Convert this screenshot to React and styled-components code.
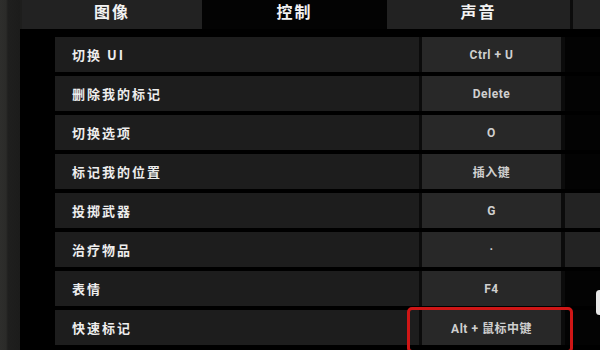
import React from "react";
import styled, { createGlobalStyle } from "styled-components";

const Global = createGlobalStyle`
  html, body { margin: 0; padding: 0; background: #000; }
  body { width: 600px; height: 350px; overflow: hidden; }
  * { box-sizing: border-box; }
`;

const Page = styled.div`
  position: relative;
  width: 600px;
  height: 350px;
  display: flex;
  background: #000;
  font-family: "Noto Sans CJK SC", "Noto Sans", sans-serif;
  overflow: hidden;
`;

const SideStrip = styled.div`
  width: 20px;
  flex-shrink: 0;
  background: linear-gradient(90deg, #2e2e2c 0px, #2b2b29 6px, #1f1f1e 8px, #1c1c1b 20px);
`;

const Main = styled.div`
  flex: 1;
  display: flex;
  flex-direction: column;
  min-width: 0;
`;

const TabBar = styled.div`
  height: 29px;
  display: flex;
  padding-left: 2px;
  background: #1e1e1d;
  flex-shrink: 0;
`;

const Tab = styled.div`
  width: ${(p) => p.$w}px;
  flex-shrink: 0;
  background: ${(p) => (p.$active ? "#030303" : "#222222")};
  color: #f2f2f2;
  font-size: 16px;
  font-weight: 700;
  letter-spacing: 2px;
  line-height: 22px;
  text-align: center;
`;

const TabGap = styled.div`
  width: 3px;
  flex-shrink: 0;
  background: #0c0c0c;
`;

const TabFill = styled.div`
  flex: 1;
  background: #242424;
`;

const Body = styled.div`
  flex: 1;
  padding: 8px 0 0 35px;
  display: flex;
  flex-direction: column;
  gap: 4px;
  background: #000;
`;

const Row = styled.div`
  height: 35px;
  flex-shrink: 0;
  display: grid;
  grid-template-columns: 364px 139px 1fr;
  column-gap: 3px;
  background: #0b0b0b;
`;

const LabelCell = styled.div`
  background: #1d1d1d;
  display: flex;
  align-items: center;
  padding-left: 17px;
  color: #ededed;
  font-size: 13px;
  font-weight: 700;
  letter-spacing: 2px;
`;

const KeyCell = styled.div`
  position: relative;
  background: #282828;
  display: flex;
  align-items: center;
  justify-content: center;
  color: #cfcfcf;
  font-family: "Roboto", "Noto Sans CJK SC", sans-serif;
  font-size: 12px;
  font-weight: 700;
  letter-spacing: 0.5px;
`;

const AltCell = styled.div`
  margin-left: 1px;
  background: ${(p) => (p.$grey ? "#232323" : "#030303")};
`;

const Highlight = styled.div`
  position: absolute;
  left: -15px;
  right: -12px;
  top: -3px;
  bottom: -8px;
  border: 3px solid #cf1616;
  border-radius: 5px;
  pointer-events: none;
`;

const EdgeSliver = styled.div`
  position: absolute;
  right: -3px;
  top: 290px;
  width: 7px;
  height: 25px;
  border-radius: 4px;
  background: #e8e8e8;
`;

const rows = [
  { label: "切换 UI", key: "Ctrl + U" },
  { label: "删除我的标记", key: "Delete" },
  { label: "切换选项", key: "O" },
  { label: "标记我的位置", key: "插入键" },
  { label: "投掷武器", key: "G", grey: true },
  { label: "治疗物品", key: "·", grey: true },
  { label: "表情", key: "F4" },
  { label: "快速标记", key: "Alt + 鼠标中键", highlight: true },
];

export default function App() {
  return (
    <>
      <Global />
      <Page>
        <SideStrip />
        <Main>
          <TabBar>
            <Tab $w={180}>图像</Tab>
            <Tab $w={185} $active>控制</Tab>
            <Tab $w={183}>声音</Tab>
            <TabGap />
            <TabFill />
          </TabBar>
          <Body>
            {rows.map((r) => (
              <Row key={r.label}>
                <LabelCell>{r.label}</LabelCell>
                <KeyCell>
                  {r.key}
                  {r.highlight && <Highlight />}
                </KeyCell>
                <AltCell $grey={r.grey} />
              </Row>
            ))}
          </Body>
        </Main>
        <EdgeSliver />
      </Page>
    </>
  );
}
